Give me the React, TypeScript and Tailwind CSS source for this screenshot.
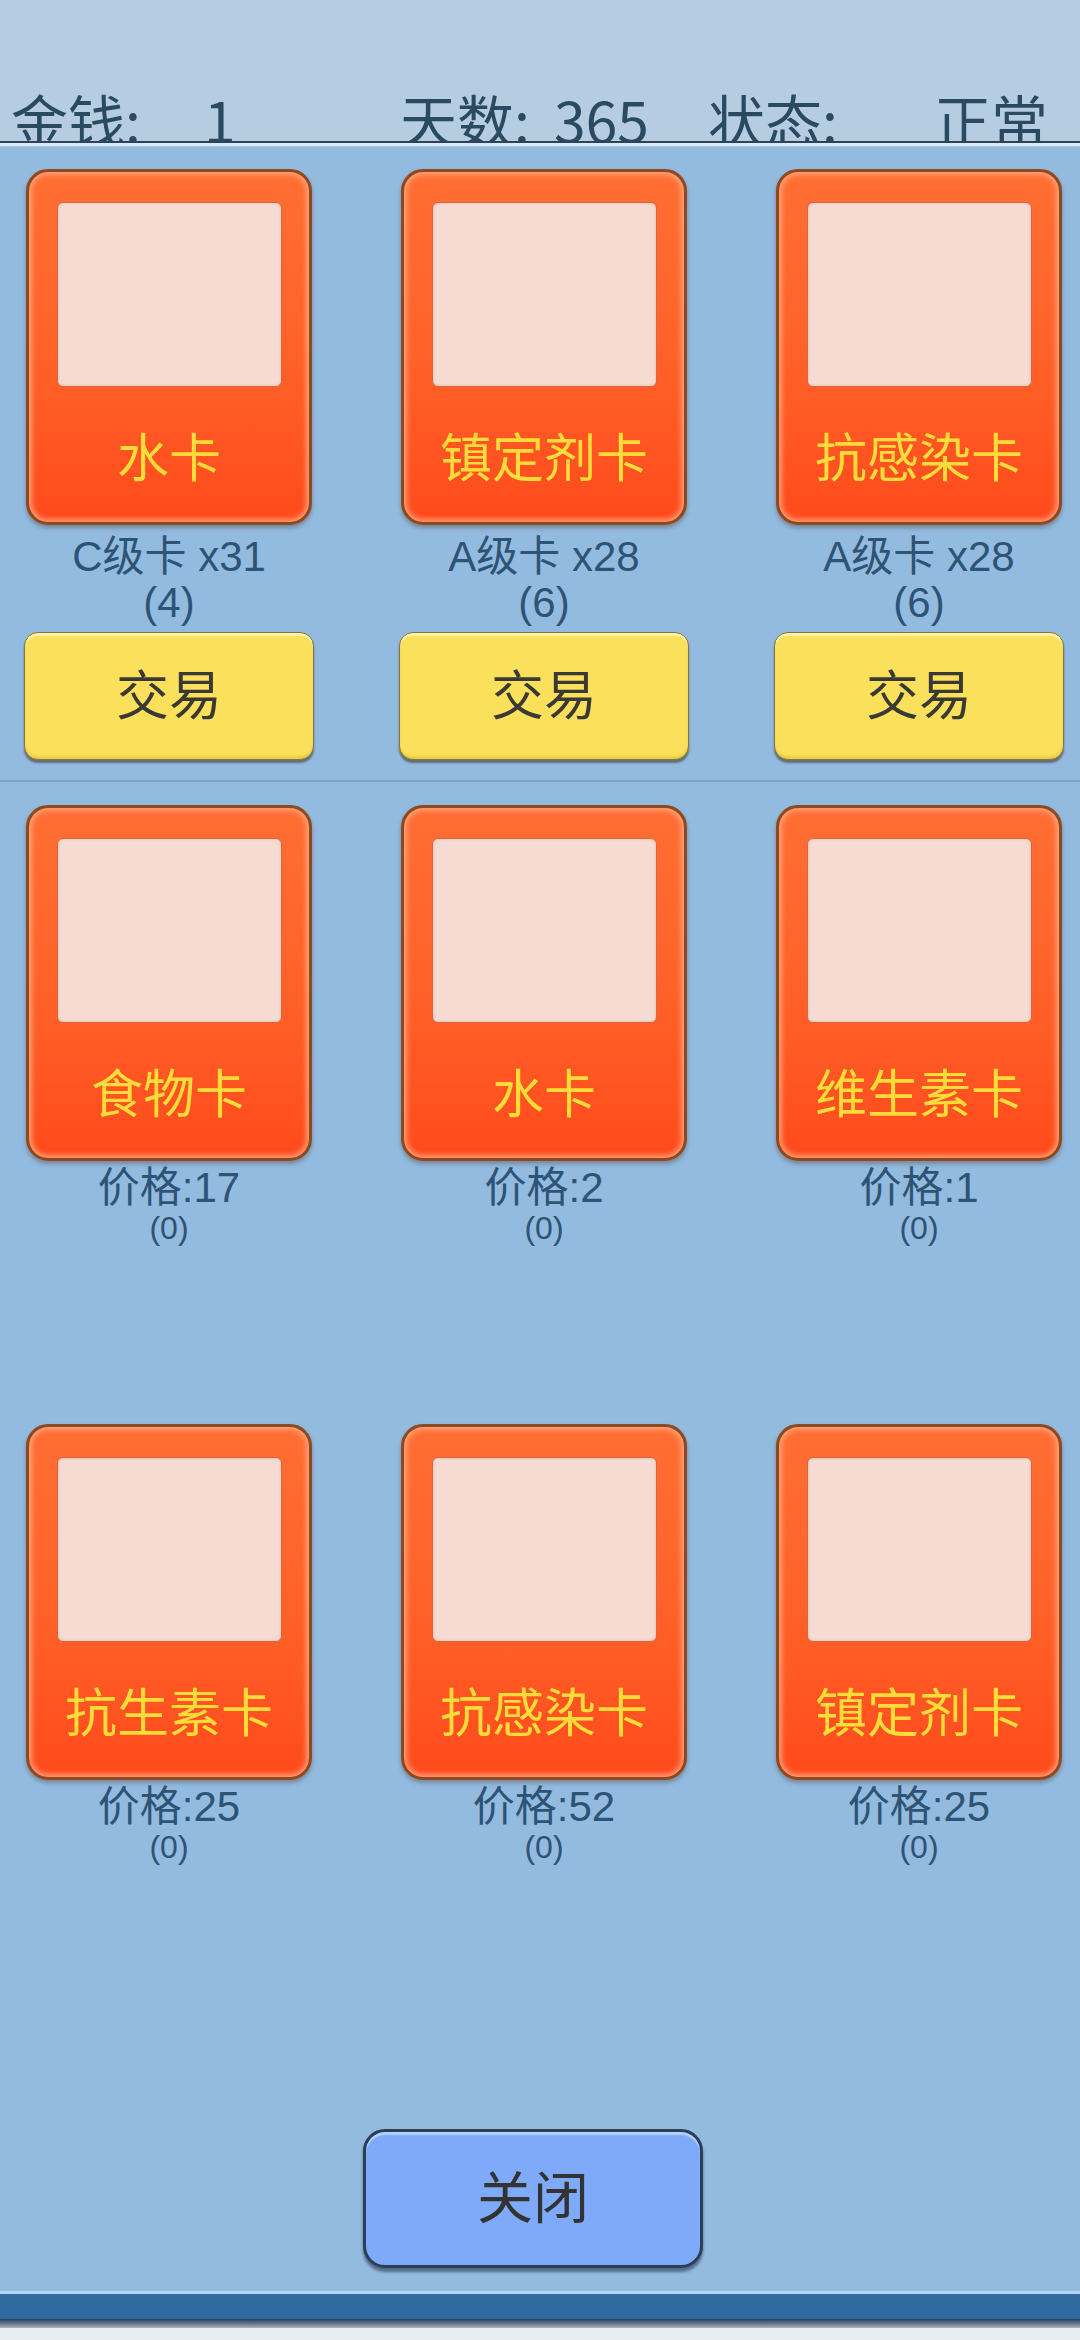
import React from "react";

const FONT = "font-['Liberation_Sans','Noto_Sans_CJK_SC',sans-serif]";

const owned = [
  { name: "水卡", grade: "C级卡 x31", count: "(4)" },
  { name: "镇定剂卡", grade: "A级卡 x28", count: "(6)" },
  { name: "抗感染卡", grade: "A级卡 x28", count: "(6)" },
];

const shopRows = [
  [
    { name: "食物卡", price: 17 },
    { name: "水卡", price: 2 },
    { name: "维生素卡", price: 1 },
  ],
  [
    { name: "抗生素卡", price: 25 },
    { name: "抗感染卡", price: 52 },
    { name: "镇定剂卡", price: 25 },
  ],
];

function Card({ name }: { name: string }) {
  return (
    <div className="flex h-[356px] w-[286px] shrink-0 flex-col rounded-[22px] border-[3px] border-[#8a4a22] bg-linear-to-b from-[#ff6e34] via-[#ff6229] to-[#ff4a1c] pt-[30px] shadow-[inset_0_0_5px_3px_rgba(255,168,128,0.85),0_3px_4px_rgba(70,40,20,0.35)]">
      <div className="mx-auto h-[185px] w-[225px] rounded-[6px] border border-[#d8663e] bg-[#f6dbd2] shadow-[inset_0_0_3px_rgba(220,150,120,0.5)]" />
      <div className="flex flex-1 items-center justify-center pt-[8px]">
        <span className={`${FONT} text-[52px] leading-none text-[#ffdc3a]`}>{name}</span>
      </div>
    </div>
  );
}

export default function App() {
  return (
    <div className={`${FONT} flex h-[2340px] w-[1080px] flex-col overflow-hidden bg-[#93bbe0]`}>
      {/* header, text is clipped by the rule below it */}
      <div className="h-[141px] overflow-hidden bg-[#b6cde1]">
        <div className="flex pl-[11px] pt-[82px] font-['Noto_Sans_CJK_SC',sans-serif] text-[57px] leading-[72px] text-[#2a4a61]">
          <span className="w-[193px] shrink-0">金钱:</span>
          <span className="w-[196px] shrink-0">1</span>
          <span className="w-[154px] shrink-0">天数:</span>
          <span className="w-[154px] shrink-0">365</span>
          <span className="w-[226px] shrink-0">状态:</span>
          <span className="shrink-0">正常</span>
        </div>
      </div>
      <div className="h-[2px] bg-[#2e4356]" />
      <div className="h-[3px] bg-[#dbe9f6]" />
      <div className="h-px bg-[#aac8e4]" />

      {/* main */}
      <div className="flex flex-1 flex-col pt-[22px]">
        <div className="flex gap-x-[89px] pl-[26px]">
          {owned.map((c, i) => (
            <div key={i} className="flex w-[286px] flex-col items-center">
              <Card name={c.name} />
              <div className="mt-[9px] text-center text-[42px] leading-[46px] text-[#2e5374]">
                <div>{c.grade}</div>
                <div>{c.count}</div>
              </div>
              <button className="mt-[6px] flex h-[128px] w-[290px] shrink-0 items-center justify-center rounded-[14px] border border-[#857546] bg-[#fbe15b] shadow-[inset_0_3px_1px_#fff3a6,inset_0_-3px_2px_#eccd48,0_3px_2px_rgba(60,50,20,0.55)]">
                <span className="text-[53px] leading-none text-[#3a3934]">交易</span>
              </button>
            </div>
          ))}
        </div>

        <div className="mt-[20px] h-[2px] bg-[#7ba4ca]" />

        <div className="mt-[23px] flex flex-col gap-y-[178px]">
          {shopRows.map((row, r) => (
            <div key={r} className="flex gap-x-[89px] pl-[26px]">
              {row.map((c, i) => (
                <div key={i} className="flex w-[286px] flex-col items-center">
                  <Card name={c.name} />
                  <div className="mt-[5px] text-center text-[#2e5374]">
                    <div className="text-[42px] leading-[44px]">价格:{c.price}</div>
                    <div className="text-[32px] leading-[36px]">(0)</div>
                  </div>
                </div>
              ))}
            </div>
          ))}
        </div>

        <button className="ml-[363px] mt-[264px] flex h-[139px] w-[340px] items-center justify-center rounded-[22px] border-[3px] border-[#2c3f56] bg-[#7eaaf9] shadow-[inset_0_3px_1px_#b4d0ff,0_4px_3px_rgba(20,30,50,0.5)]">
          <span className="text-[56px] leading-none text-[#333333]">关闭</span>
        </button>
      </div>

      {/* bottom bar */}
      <div className="h-[3px] bg-[#b3d3ef]" />
      <div className="h-[25px] bg-[#316a9f]" />
      <div className="h-[9px] bg-linear-to-b from-[#26405a] to-[#a7b2bd]" />
      <div className="h-[12px] bg-[#e8edf2]" />
    </div>
  );
}
